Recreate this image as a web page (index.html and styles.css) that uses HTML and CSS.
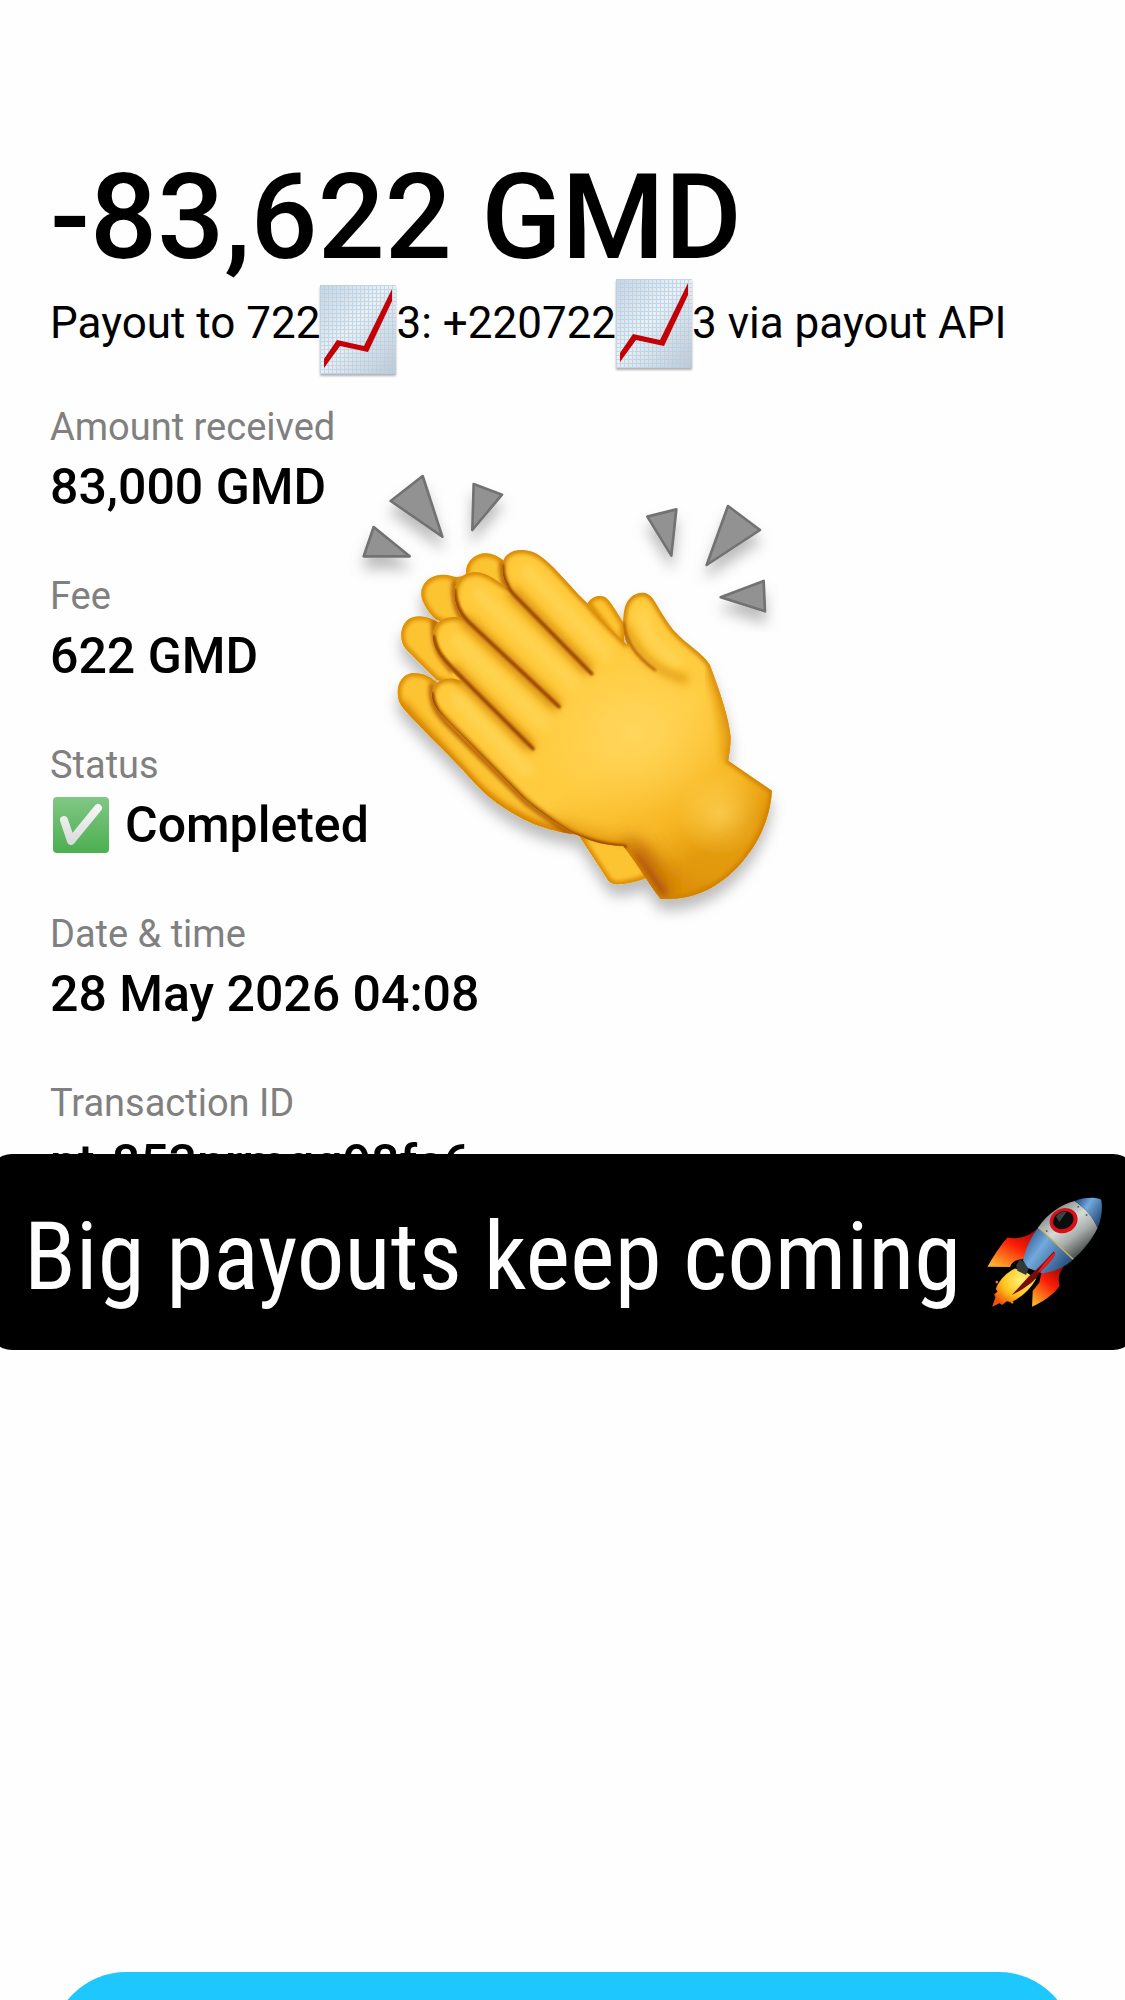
FILE: index.html
```html
<!DOCTYPE html>
<html lang="en">

<head>
    <meta charset="UTF-8">
    <meta name="viewport" content="width=device-width, initial-scale=1.0">
    <title>Payout</title>
    <link rel="stylesheet" href="styles.css">
</head>

<body>
    <div class="screen">
        <main class="receipt">
            <h1 class="total">-83,622 GMD</h1>
            <p class="summary">Payout to 722<span class="mask"><svg class="chart" viewBox="0 0 76 89" aria-hidden="true">
                        <defs>
                            <linearGradient id="paper" x1="0" y1="0" x2="1" y2="1">
                                <stop offset="0" stop-color="#ccd3db" />
                                <stop offset="0.45" stop-color="#eeeff0" />
                                <stop offset="1" stop-color="#c3c8ce" />
                            </linearGradient>
                            <pattern id="grid" width="4" height="4" patternUnits="userSpaceOnUse">
                                <path d="M0 0.5H4M0.5 0V4" stroke="#a9d0f0" stroke-width="1" fill="none" />
                            </pattern>
                        </defs>
                        <rect width="76" height="89" fill="url(#paper)" />
                        <rect width="76" height="89" fill="url(#grid)" opacity="0.7" />
                        <path d="M4 83V74L17 55L44 61L72 4V16L48 67L20 61Z" fill="#c20006" />
                    </svg></span>3: +220722<span class="mask"><svg class="chart chart_high" viewBox="0 0 76 89" aria-hidden="true">
                        <rect width="76" height="89" fill="url(#paper)" />
                        <rect width="76" height="89" fill="url(#grid)" opacity="0.7" />
                        <path d="M4 83V74L17 55L44 61L72 4V16L48 67L20 61Z" fill="#c20006" />
                    </svg></span>3 via payout API</p>

            <dl class="details">
                <div class="row">
                    <dt>Amount received</dt>
                    <dd>83,000 GMD</dd>
                </div>
                <div class="row">
                    <dt>Fee</dt>
                    <dd>622 GMD</dd>
                </div>
                <div class="row">
                    <dt>Status</dt>
                    <dd class="status">
                        <svg class="check" viewBox="0 0 56 56" aria-hidden="true">
                            <defs>
                                <linearGradient id="green" x1="0" y1="0" x2="0" y2="1">
                                    <stop offset="0" stop-color="#81c784" />
                                    <stop offset="1" stop-color="#4caf50" />
                                </linearGradient>
                                <linearGradient id="tick" x1="0" y1="0" x2="0" y2="1">
                                    <stop offset="0" stop-color="#f5f5f5" />
                                    <stop offset="1" stop-color="#dcdcdc" />
                                </linearGradient>
                            </defs>
                            <rect width="56" height="56" rx="4" fill="url(#green)" />
                            <path d="M11 23L18 44L45 11" fill="none" stroke="url(#tick)" stroke-width="8" stroke-linecap="round" stroke-linejoin="round" />
                        </svg>
                        Completed
                    </dd>
                </div>
                <div class="row">
                    <dt>Date &amp; time</dt>
                    <dd>28 May 2026 04:08</dd>
                </div>
                <div class="row">
                    <dt>Transaction ID</dt>
                    <dd>pt-853nrmgq98fs6</dd>
                </div>
            </dl>

            <svg class="clap" viewBox="0 0 1380 1440" aria-hidden="true">
                <defs>
                    <linearGradient id="skin" x1="0" y1="0.1" x2="0.6" y2="1">
                        <stop offset="0" stop-color="#ffc938" />
                        <stop offset="0.65" stop-color="#ffcc40" />
                        <stop offset="0.88" stop-color="#f7b826" />
                        <stop offset="1" stop-color="#e39a0c" />
                    </linearGradient>
                    <radialGradient id="glow">
                        <stop offset="0" stop-color="#ffd65c" />
                        <stop offset="1" stop-color="#ffd65c" stop-opacity="0" />
                    </radialGradient>
                    <filter id="blur3" x="-20%" y="-20%" width="140%" height="140%">
                        <feGaussianBlur stdDeviation="3" />
                    </filter>
                    <filter id="blur6" x="-20%" y="-20%" width="140%" height="140%">
                        <feGaussianBlur stdDeviation="7" />
                    </filter>
                    <filter id="blur14" x="-30%" y="-30%" width="160%" height="160%">
                        <feGaussianBlur stdDeviation="14" />
                    </filter>
                    <filter id="blur30" x="-60%" y="-60%" width="220%" height="220%">
                        <feGaussianBlur stdDeviation="28" />
                    </filter>
                    <filter id="drop" x="-10%" y="-10%" width="120%" height="125%">
                        <feDropShadow dx="0" dy="34" stdDeviation="20" flood-color="#000" flood-opacity="0.26" />
                    </filter>
                    <path id="back" d="M378 372C376 335 405 309 440 310C470 312 490 330 510 350L560 460L360 520C330 520 290 520 272 492C250 465 236 435 248 410C262 378 300 368 335 378C350 385 365 380 378 372ZM300 520L400 720L290 690C270 670 220 620 200 600C176 575 178 530 205 508C230 492 265 497 300 520ZM174 740C168 705 185 675 215 669C250 667 270 680 290 696L720 1155C690 1153 620 1140 570 1117C500 1085 440 1040 400 995C330 915 250 845 190 775C180 762 175 752 174 740ZM742 460C755 440 775 433 795 441C812 452 825 480 852 520V600ZM712 1150L800 1285C812 1305 825 1305 850 1302C875 1298 900 1292 930 1280L870 1180Z" />
                    <path id="hand" d="M487 350C487 315 515 298 550 300C590 303 612 325 640 352C675 388 705 425 742 460C775 500 820 545 862 585C846 545 848 510 853 480C860 442 890 423 918 430C945 440 950 475 1000 540C1040 585 1090 610 1110 645C1128 695 1165 790 1172 860C1172 890 1168 910 1165 932L1296 1022C1290 1110 1255 1180 1205 1238C1130 1322 1050 1352 962 1346C935 1315 900 1250 850 1188C780 1185 740 1168 690 1145C640 1115 590 1080 550 1045L310 800C268 760 265 720 295 695C315 683 342 682 365 694L320 648C275 600 265 545 298 515C320 500 345 498 368 505C335 460 335 400 370 377C400 358 430 365 460 385L505 415C492 395 487 375 487 350Z" />
                    <clipPath id="back_clip">
                        <use href="#back" />
                    </clipPath>
                    <clipPath id="hand_clip">
                        <use href="#hand" />
                    </clipPath>
                </defs>
                <g filter="url(#drop)" fill="#929292" stroke="#727272" stroke-width="8" stroke-linejoin="round">
                    <path d="M248 78L152 153L307 260Z" />
                    <path d="M401 102L486 134L397 240Z" />
                    <path d="M101 231L209 319L71 319Z" />
                    <path d="M922 200L1009 178L994 317Z" />
                    <path d="M1164 168L1260 240L1100 345Z" />
                    <path d="M1142 442L1271 393L1275 484Z" />
                </g>
                <g filter="url(#drop)">
                    <use href="#back" fill="#fdc433" />
                    <g clip-path="url(#back_clip)">
                        <use href="#back" fill="none" stroke="#d98a05" stroke-width="20" filter="url(#blur6)" />
                        <path d="M180 760L400 1010C500 1100 600 1140 710 1160" fill="none" stroke="#d98600" stroke-width="30" filter="url(#blur14)" />
                        <path d="M345 390C335 450 350 490 390 540M283 510C275 590 300 620 340 665M276 700C268 760 290 790 330 830L560 1060L700 1160M487 335C480 390 500 420 520 440" fill="none" stroke="#a85505" stroke-width="14" filter="url(#blur6)" />
                    </g>
                    <use href="#hand" fill="url(#skin)" />
                    <g clip-path="url(#hand_clip)">
                        <ellipse cx="880" cy="850" rx="290" ry="250" fill="url(#glow)" />
                        <path d="M850 1200C890 1240 920 1290 960 1360" fill="none" stroke="#a64a08" stroke-width="90" filter="url(#blur30)" />
                        <path d="M640 1130C720 1170 800 1190 870 1200C930 1240 1000 1330 1120 1330" fill="none" stroke="#d68400" stroke-width="36" filter="url(#blur30)" />
                        <path d="M880 1230L960 1350" fill="none" stroke="#a64a08" stroke-width="50" filter="url(#blur14)" opacity="0.6" />
                        <ellipse cx="1140" cy="1090" rx="130" ry="130" fill="url(#glow)" opacity="0.7" />
                        <use href="#hand" fill="none" stroke="#d08000" stroke-width="18" filter="url(#blur6)" />
                        <path d="M1112 660C1150 780 1165 860 1160 930" fill="none" stroke="#e39a0c" stroke-width="26" filter="url(#blur14)" />
                        <g fill="none" stroke="#d88b08" stroke-width="34" stroke-linecap="round" filter="url(#blur14)">
                            <path d="M520 430L740 655" />
                            <path d="M380 515L645 762" />
                            <path d="M340 660L565 885" />
                        </g>
                        <path d="M862 540C880 590 920 635 960 655C990 672 1010 678 1035 690" fill="none" stroke="#dd930c" stroke-width="20" stroke-linecap="round" filter="url(#blur14)" />
                        <g fill="none" stroke="#ffd452" stroke-width="38" stroke-linecap="round" filter="url(#blur14)">
                            <path d="M560 360L800 610" />
                            <path d="M415 430L700 700" />
                            <path d="M350 570L610 820" />
                            <path d="M350 745L560 960" />
                            <path d="M905 490C920 560 960 600 1010 630" />
                        </g>
                        <g fill="none" stroke="#9a4606" stroke-width="11" stroke-linecap="round" filter="url(#blur3)">
                            <path d="M487 345C487 385 500 410 520 432L755 671" />
                            <path d="M343 420C345 460 360 490 385 515L657 770" />
                            <path d="M281 560C288 600 305 620 340 657L579 896" />
                            <path d="M276 730C280 770 300 795 330 825L560 1056C610 1095 650 1125 690 1147C740 1168 790 1187 855 1190" />
                        </g>
                        <path d="M851 520C856 575 890 620 945 660" fill="none" stroke="#b86508" stroke-width="8" stroke-linecap="round" filter="url(#blur3)" />
                    </g>
                </g>
            </svg>
        </main>

        <div class="caption">
            <span>Big payouts keep coming</span>
            <svg class="rocket" viewBox="255 200 360 340" aria-hidden="true">
                <defs>
                    <linearGradient id="steel" x1="0.2" y1="0.1" x2="0.8" y2="0.9">
                        <stop offset="0" stop-color="#777d7d" />
                        <stop offset="0.4" stop-color="#d5dbd9" />
                        <stop offset="0.65" stop-color="#a8aeac" />
                        <stop offset="1" stop-color="#3b3f40" />
                    </linearGradient>
                    <linearGradient id="blue" x1="0" y1="0.2" x2="1" y2="0.9">
                        <stop offset="0" stop-color="#26558c" />
                        <stop offset="0.35" stop-color="#73a9dc" />
                        <stop offset="1" stop-color="#193c68" />
                    </linearGradient>
                    <linearGradient id="fin" x1="0.9" y1="0" x2="0.2" y2="1">
                        <stop offset="0" stop-color="#9d0505" />
                        <stop offset="0.45" stop-color="#fa1d06" />
                        <stop offset="1" stop-color="#ffb02a" />
                    </linearGradient>
                    <radialGradient id="flame" cx="0.65" cy="0.3" r="0.75">
                        <stop offset="0" stop-color="#fff27a" />
                        <stop offset="0.55" stop-color="#ffc51c" />
                        <stop offset="1" stop-color="#f0520c" />
                    </radialGradient>
                </defs>
                <path d="M345 418C318 430 292 460 287 480L292 487L282 496L286 505L276 533L298 523L306 528L320 517L332 520C365 505 392 480 408 450L380 430Z" fill="url(#flame)" />
                <g fill="#f47a12">
                    <circle cx="290" cy="459" r="4" />
                    <circle cx="336" cy="520" r="4" />
                    <circle cx="300" cy="500" r="6" />
                    <circle cx="316" cy="511" r="5" />
                </g>
                <path d="M412 297C388 322 352 332 322 325C300 350 280 380 262 413L330 414C336 396 350 390 370 390Z" fill="url(#fin)" />
                <path d="M492 412L424 432L418 460L398 486L396 533C430 518 462 496 479 470C472 446 480 428 492 412Z" fill="url(#fin)" />
                <path d="M348 408L360 390L388 412L378 438L352 425Z" fill="#32393b" />
                <path d="M415 294L520 390C498 412 462 428 428 433L384 417L369 394C376 358 392 325 415 294Z" fill="url(#blue)" />
                <path d="M415 294C442 252 486 225 524 215C556 236 580 264 593 296C576 332 548 366 520 390Z" fill="url(#steel)" />
                <path d="M415 294L520 390" stroke="#cdb45c" stroke-width="4" />
                <path d="M524 215C552 203 590 203 604 211C610 238 604 272 593 296C578 262 554 234 524 215Z" fill="url(#blue)" />
                <ellipse cx="491" cy="274" rx="43" ry="37" transform="rotate(-25 491 274)" fill="#d80f17" />
                <ellipse cx="490" cy="273" rx="32" ry="26" transform="rotate(-25 490 273)" fill="#0a0d0e" />
                <path d="M468 262C474 252 488 246 500 248L478 278Z" fill="#3a4244" />
                <path d="M461 367C436 395 414 418 386 442L335 498C372 480 405 458 418 432C440 408 458 392 466 373Z" fill="#7a0c08" />
                <path d="M463 369C440 392 424 410 412 432L426 424C444 406 460 390 466 373Z" fill="#e81a1c" />
                <g fill="#5f6664">
                    <circle cx="440" cy="305" r="3" />
                    <circle cx="516" cy="376" r="3" />
                    <circle cx="560" cy="257" r="3" />
                    <circle cx="535" cy="232" r="3" />
                </g>
            </svg>
        </div>

        <button class="action" type="button" aria-label="Done"></button>
    </div>
</body>

</html>
```
FILE: styles.css
```css
* {
    margin: 0;
    padding: 0;
    box-sizing: border-box;
}

body {
    background: #fefefe;
    color: #000;
    font-family: Roboto, "Liberation Sans", sans-serif;
}

.screen {
    display: flex;
    flex-direction: column;
    height: 100vh;
    overflow: hidden;
    position: relative;
}

.receipt {
    padding: 148px 50px 0;
    position: relative;
}

.total {
    font-size: 118px;
    font-weight: 500;
    line-height: 140px;
}

.summary {
    margin-top: 7px;
    font-size: 44px;
    line-height: 56px;
    white-space: nowrap;
}

.mask {
    display: inline-block;
    width: 76px;
    height: 43px;
    position: relative;
    vertical-align: baseline;
}

.chart {
    position: absolute;
    top: -10px;
    left: 0;
    width: 76px;
    height: 89px;
    filter: drop-shadow(0 2px 1px rgba(0, 0, 0, 0.3));
}

.chart_high {
    top: -16px;
}

.details {
    display: flex;
    flex-direction: column;
    gap: 55px;
    margin-top: 52px;
}

.row {
    display: flex;
    flex-direction: column;
    gap: 6px;
}

.row dt {
    color: #808080;
    font-size: 38px;
    line-height: 48px;
}

.row dd {
    font-size: 50px;
    font-weight: 500;
    line-height: 60px;
}

.row .status {
    display: flex;
    align-items: center;
    gap: 16px;
}

.check {
    width: 56px;
    height: 56px;
    margin-left: 3px;
}

/* sticker over the details */
.clap {
    position: absolute;
    top: 450px;
    left: 340px;
    width: 460px;
    height: 480px;
}

.caption {
    position: absolute;
    top: 1154px;
    left: -12px;
    right: -12px;
    display: flex;
    align-items: center;
    justify-content: space-between;
    height: 196px;
    padding: 8px 32px 0 36px;
    border-radius: 24px;
    background: #000;
    color: #fff;
    font-family: "Roboto Condensed", Roboto, sans-serif;
    font-size: 95px;
    white-space: nowrap;
}

.rocket {
    flex: none;
    width: 120px;
    height: 113px;
    margin-bottom: 8px;
}

.action {
    flex: none;
    height: 150px;
    margin: auto 51px -122px;
    border: 0;
    border-radius: 75px;
    background: #1ec8ff;
}
```
